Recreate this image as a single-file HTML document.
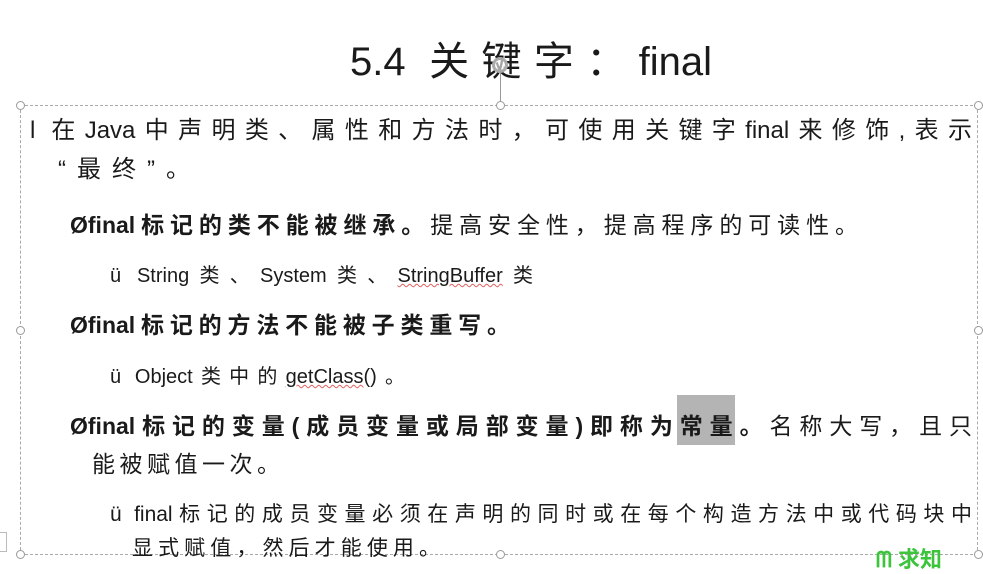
<!DOCTYPE html>
<html><head><meta charset="utf-8"><style>
html,body{margin:0;padding:0;background:#fff;}
body{width:983px;height:564px;position:relative;overflow:hidden;font-family:"Liberation Sans","Noto Sans CJK SC",sans-serif;color:#1a1a1a;}
.t{position:absolute;white-space:nowrap;text-align:justify;text-align-last:justify;line-height:1;}
.b{font-weight:bold;}
.box{position:absolute;left:20px;top:105px;width:958px;height:450px;border:1px dashed #aaa;box-sizing:border-box;}
.h{position:absolute;width:9px;height:9px;border:1.5px solid #999;border-radius:50%;background:#fff;box-sizing:border-box;}
.sq{text-decoration:underline wavy #e06060;text-decoration-thickness:1px;}
</style></head><body>
<div class="box"></div>
<div style="position:absolute;left:500px;top:68px;width:1px;height:37px;background:#999"></div>
<div class="h" style="left:16px;top:101px"></div>
<div class="h" style="left:496px;top:101px"></div>
<div class="h" style="left:974px;top:101px"></div>
<div class="h" style="left:16px;top:326px"></div>
<div class="h" style="left:974px;top:326px"></div>
<div class="h" style="left:16px;top:550px"></div>
<div class="h" style="left:496px;top:550px"></div>
<div class="h" style="left:974px;top:550px"></div>
<div style="position:absolute;left:-2px;top:532px;width:7px;height:18px;border:1px solid #bbb"></div>

<div class="t" style="left:350px;top:42px;width:362px;font-size:40px;">5.4 关键字：final</div>
<div style="position:absolute;left:492px;top:57px;width:16px;height:16px;border-radius:50%;border:3px solid #aaa;box-sizing:border-box;background:rgba(255,255,255,.6)"></div>

<div class="t" style="left:30px;top:119px;width:942px;font-size:24px;">l 在Java中声明类、属性和方法时，可使用关键字final来修饰,表示</div>
<div class="t" style="left:58px;top:158px;width:132px;font-size:24px;">“最终”。</div>

<div class="t" style="left:70px;top:214px;width:788px;font-size:23px;"><span class="b">Øfinal标记的类不能被继承。</span>提高安全性，提高程序的可读性。</div>
<div class="t" style="left:110px;top:266px;width:423px;font-size:20px;">ü String类、System类、<span class="sq">StringBuffer</span>类</div>

<div class="t b" style="left:70px;top:314px;width:440px;font-size:23px;">Øfinal标记的方法不能被子类重写。</div>
<div class="t" style="left:110px;top:367px;width:295px;font-size:20px;">ü Object类中的<span class="sq">getClass</span>()。</div>

<div style="position:absolute;left:677px;top:395px;width:58px;height:50px;background:#b4b4b4"></div>
<div class="t" style="left:70px;top:415px;width:902px;font-size:23px;"><span class="b">Øfinal标记的变量(成员变量或局部变量)即称为常量。</span>名称大写，且只</div>
<div class="t" style="left:92px;top:453px;width:188px;font-size:23px;">能被赋值一次。</div>

<div class="t" style="left:110px;top:504px;width:862px;font-size:21px;">ü final标记的成员变量必须在声明的同时或在每个构造方法中或代码块中</div>
<div class="t" style="left:132px;top:538px;width:308px;font-size:21px;">显式赋值，然后才能使用。</div>

<div style="position:absolute;left:876px;top:542px;font-size:22px;color:#3cc43c;font-weight:bold;white-space:nowrap;">ᗰ 求知</div>
</body></html>
